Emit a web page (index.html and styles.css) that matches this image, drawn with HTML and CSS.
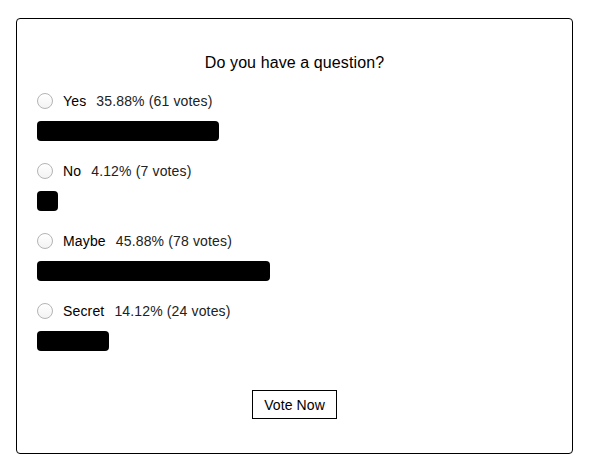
FILE: index.html
```html
<!DOCTYPE html>
<html>
<head>
<meta charset="utf-8">
<link rel="stylesheet" href="styles.css">
</head>
<body>
<div class="card">
  <h2 class="title">Do you have a question?</h2>
  <div class="options">
    <div class="option">
      <label class="row"><input type="radio" name="q" class="radio"><span class="name">Yes</span><span class="result">35.88% (61 votes)</span></label>
      <div class="track"><div class="bar" style="width:35.88%"></div></div>
    </div>
    <div class="option">
      <label class="row"><input type="radio" name="q" class="radio"><span class="name">No</span><span class="result">4.12% (7 votes)</span></label>
      <div class="track"><div class="bar" style="width:4.12%"></div></div>
    </div>
    <div class="option">
      <label class="row"><input type="radio" name="q" class="radio"><span class="name">Maybe</span><span class="result">45.88% (78 votes)</span></label>
      <div class="track"><div class="bar" style="width:45.88%"></div></div>
    </div>
    <div class="option">
      <label class="row"><input type="radio" name="q" class="radio"><span class="name">Secret</span><span class="result">14.12% (24 votes)</span></label>
      <div class="track"><div class="bar" style="width:14.12%"></div></div>
    </div>
  </div>
  <div class="actions"><button class="vote">Vote Now</button></div>
</div>
</body>
</html>
```
FILE: styles.css
```css
html, body {
  margin: 0;
  background: #fff;
}
body {
  padding: 18px 20px 0 16px;
  font-family: "Liberation Sans", Arial, sans-serif;
  color: #000;
}
.card {
  width: 557px;
  height: 436px;
  box-sizing: border-box;
  border: 1px solid #000;
  border-radius: 4px;
  padding: 35px 20px 0 20px;
}
.title {
  margin: 0;
  font-size: 16px;
  font-weight: normal;
  line-height: 18px;
  text-align: center;
  letter-spacing: 0.1px;
}
.options {
  margin-top: 21px;
  display: flex;
  flex-direction: column;
  gap: 22px;
}
.option {
  display: flex;
  flex-direction: column;
  gap: 12px;
}
.row {
  display: flex;
  align-items: center;
  height: 16px;
  font-size: 14px;
  line-height: 16px;
  letter-spacing: 0.15px;
}
.radio {
  appearance: none;
  -webkit-appearance: none;
  margin: 0 10px 0 0;
  width: 16px;
  height: 16px;
  box-sizing: border-box;
  border: 1px solid #b4b4b4;
  border-radius: 50%;
  background: linear-gradient(#ffffff, #f3f3f3);
  flex: none;
}
.name {
  color: #000;
}
.result {
  margin-left: 10px;
  color: #222;
}
.track {
  width: 507px;
  height: 20px;
}
.bar {
  height: 20px;
  background: #000;
  border-radius: 4px;
}
.actions {
  margin-top: 39px;
  display: flex;
  justify-content: center;
}
.vote {
  height: 29px;
  padding: 0 11px;
  border: 1px solid #000;
  border-radius: 0;
  background: #fff;
  font-family: "Liberation Sans", Arial, sans-serif;
  font-size: 14px;
  color: #000;
  letter-spacing: 0.1px;
}
```
